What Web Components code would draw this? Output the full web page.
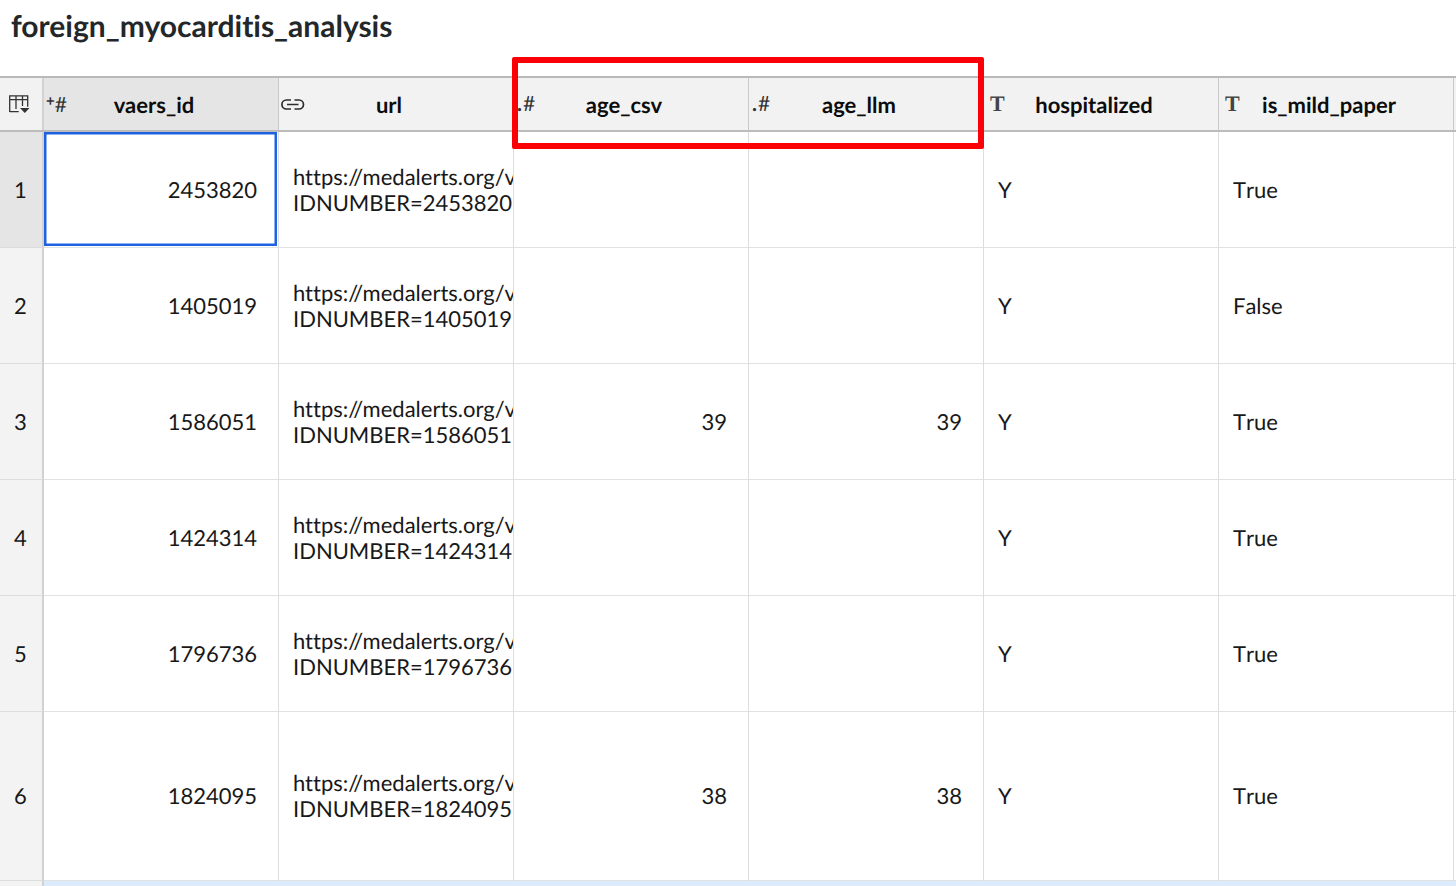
<!DOCTYPE html>
<html>
<head>
<meta charset="utf-8">
<title>foreign_myocarditis_analysis</title>
<style>
  html, body { margin: 0; padding: 0; background: #fff; overflow: hidden; }
  body { font-family: Lato, "Liberation Sans", sans-serif; color: #111; height: 886px;
         text-rendering: geometricPrecision; }
</style>
</head>
<body>
<sheet-view>
  <sheet-title slot="title">foreign_myocarditis_analysis</sheet-title>

  <grid-row head>
    <corner-cell></corner-cell>
    <head-cell type="key" active>vaers_id</head-cell>
    <head-cell type="link">url</head-cell>
    <head-cell type="num">age_csv</head-cell>
    <head-cell type="num">age_llm</head-cell>
    <head-cell type="text">hospitalized</head-cell>
    <head-cell type="text">is_mild_paper</head-cell>
  </grid-row>

  <case-row n="1" id-num="2453820" hosp="Y" mild="True" active></case-row>
  <case-row n="2" id-num="1405019" hosp="Y" mild="False"></case-row>
  <case-row n="3" id-num="1586051" age="39" hosp="Y" mild="True"></case-row>
  <case-row n="4" id-num="1424314" hosp="Y" mild="True"></case-row>
  <case-row n="5" id-num="1796736" hosp="Y" mild="True"></case-row>
  <case-row n="6" id-num="1824095" age="38" hosp="Y" mild="True" tall></case-row>
</sheet-view>

<script>
  // titulo de la hoja
  class SheetTitle extends HTMLElement {
    constructor() {
      super();
      this.attachShadow({mode: "open"});
      this.shadowRoot.innerHTML = `
        <style>
          :host { display: block; height: 76px; box-sizing: border-box; padding: 8px 0 0 11px;
                  font: 700 30px/36px Lato, sans-serif; font-variant-ligatures: none; color: #23272a; }
        </style>
        <slot></slot>`;
    }
  }

  // una fila de la tabla, las celdas van por el slot
  class GridRow extends HTMLElement {
    constructor() {
      super();
      this.attachShadow({mode: "open"});
      this.shadowRoot.innerHTML = `
        <style>
          :host { display: grid; grid-template-columns: 44px repeat(6, 235px) 1fr; height: 116px; }
          :host([head]) { border-top: 2px solid #b9b9b9; border-bottom: 2px solid #bcbcbc;
                          height: 52px; background: #f2f2f2; }
          :host([tall]) { height: 169px; }
        </style>
        <slot></slot>`;
    }
  }

  class CornerCell extends HTMLElement {
    constructor() {
      super();
      this.attachShadow({mode: "open"});
      this.shadowRoot.innerHTML = `
        <style>
          :host { display: flex; box-sizing: border-box; border-right: 2px solid #d2d2d2;
                  padding: 17px 0 0 9px; }
          svg { display: block; }
        </style>
        <svg width="21" height="19" viewBox="0 0 21 19" fill="none" stroke="#333" stroke-width="1.3">
          <path d="M.7 17V.8h18v11M.7 4.6h18M7 .8V14M13.5 .8V11M.7 16.6h9"/>
          <path d="M11 13h9.5l-4.7 5z" fill="#333" stroke="none"/>
        </svg>`;
    }
  }

  const HEAD_ICONS = {
    key: `<span class="mark key"><i>+</i>#</span>`,
    num: `<span class="mark num"><i>.</i>#</span>`,
    text: `<span class="mark txt">T</span>`,
    link: `<svg class="lnk" width="24" height="11" viewBox="0 0 24 11" fill="none" stroke="#2c2c2c" stroke-width="1.7">
             <path d="M10 1H5.4a4.5 4.5 0 0 0 0 9H10M13.5 1H18a4.5 4.5 0 0 1 0 9h-4.5M6 5.5h11.5"/>
           </svg>`
  };

  class HeadCell extends HTMLElement {
    constructor() {
      super();
      this.attachShadow({mode: "open"});
    }
    connectedCallback() {
      const type = this.getAttribute("type");
      this.shadowRoot.innerHTML = `
        <style>
          :host { display: flex; align-items: center; box-sizing: border-box;
                  border-right: 1px solid #c9c9c9; font: 700 22px/26px Lato, sans-serif;
                  font-variant-ligatures: none; color: #0c0c0c; }
          :host([active]) { background: #e5e5e5; }
          .ic { width: 26px; flex: none; align-self: flex-start; }
          .label { flex: 1; text-align: center; padding-right: 40px; padding-top: 1px; }
          .mark { display: block; color: #333; font-weight: 400; font-size: 21px; line-height: 20px; }
          .mark i { font-style: normal; }
          .key { margin: 17px 0 0 2px; white-space: nowrap; }
          .key i { position: relative; top: -6px; font-weight: 700; font-size: 15px; }
          .num { margin: 16px 0 0 3px; white-space: nowrap; }
          .num i { font-weight: 700; margin-right: 1px; }
          .txt { margin: 16px 0 0 6px; font: 700 22px/20px "Liberation Serif", serif; color: #444; }
          .lnk { display: block; margin: 21px 0 0 2px; }
        </style>
        <div class="ic">${HEAD_ICONS[type]}</div>
        <div class="label"><slot></slot></div>`;
    }
  }

  // celda normal: right = numeros a la derecha
  class DataCell extends HTMLElement {
    constructor() {
      super();
      this.attachShadow({mode: "open"});
      this.shadowRoot.innerHTML = `
        <style>
          :host { display: flex; align-items: center; box-sizing: border-box; min-width: 0; overflow: hidden;
                  border-right: 1px solid #dcdcdc; border-bottom: 1px solid #e2e2e2;
                  font: 400 22px/26px Lato, sans-serif; font-variant-ligatures: none; font-kerning: none;
                  color: #181818; padding: 0 14px; }
          :host([right]) { justify-content: flex-end; padding-right: 21px; }
          :host([url]) { padding-right: 0; white-space: pre; font-kerning: normal; }
          :host([index]) { background: #f3f3f3; border-right: 2px solid #d2d2d2; border-bottom-color: #dcdcdc;
                           padding: 0 0 0 14px; }
          :host([index][active]) { background: #e5e5e5; }
          :host([active]:not([index])) { background: #fff;
            box-shadow: inset -1px -1px 0 #fff, inset 2.5px 2.5px 0 #1e62e0, inset -3.5px -3.5px 0 #1e62e0; }
        </style>
        <slot></slot>`;
    }
  }

  class CaseRow extends HTMLElement {
    constructor() {
      super();
      this.attachShadow({mode: "open"});
    }
    connectedCallback() {
      const a = n => this.getAttribute(n) || "";
      const on = this.hasAttribute("active") ? "active" : "";
      const tall = this.hasAttribute("tall") ? "tall" : "";
      const id = a("id-num");
      this.shadowRoot.innerHTML = `
        <style>:host { display: block; }</style>
        <grid-row ${tall}>
          <data-cell index ${on}>${a("n")}</data-cell>
          <data-cell right ${on}>${id}</data-cell>
          <data-cell url>https://medalerts.org/vaers
IDNUMBER=${id}</data-cell>
          <data-cell right>${a("age")}</data-cell>
          <data-cell right>${a("age")}</data-cell>
          <data-cell>${a("hosp")}</data-cell>
          <data-cell>${a("mild")}</data-cell>
          <data-cell></data-cell>
        </grid-row>`;
    }
  }

  // contenedor general, con la marca roja encima y la franja azul abajo
  class SheetView extends HTMLElement {
    constructor() {
      super();
      this.attachShadow({mode: "open"});
      this.shadowRoot.innerHTML = `
        <style>
          :host { display: block; position: relative; height: 886px; overflow: hidden; }
          .mark { position: absolute; left: 512px; top: 57px; width: 472px; height: 92px; box-sizing: border-box;
                  border: 6px solid #fb0007; border-radius: 2px; pointer-events: none; }
          .foot { display: grid; grid-template-columns: 44px 1fr; height: 6px; }
          .foot div:first-child { background: #f3f3f3; border-right: 2px solid #d2d2d2; }
          .foot div:last-child { background: #dcebfb; }
        </style>
        <slot name="title"></slot>
        <slot></slot>
        <div class="foot"><div></div><div></div></div>
        <div class="mark"></div>`;
    }
  }

  customElements.define("sheet-title", SheetTitle);
  customElements.define("grid-row", GridRow);
  customElements.define("corner-cell", CornerCell);
  customElements.define("head-cell", HeadCell);
  customElements.define("data-cell", DataCell);
  customElements.define("case-row", CaseRow);
  customElements.define("sheet-view", SheetView);
</script>
</body>
</html>
